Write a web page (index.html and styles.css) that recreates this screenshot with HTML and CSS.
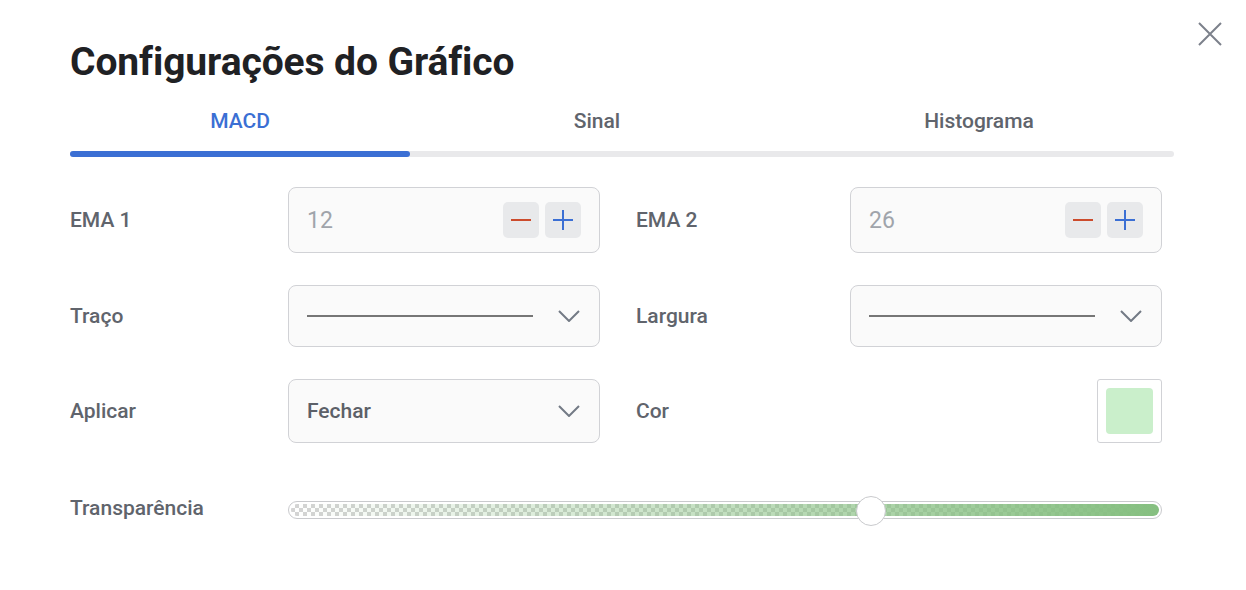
FILE: index.html
```html
<!DOCTYPE html>
<html lang="pt">
<head>
<meta charset="utf-8">
<title>Configurações do Gráfico</title>
<link rel="stylesheet" href="styles.css">
</head>
<body>
<div class="dialog">
  <button class="close" aria-label="Fechar">
    <svg width="24" height="24" viewBox="0 0 24 24"><path d="M1 1L23 23M23 1L1 23" stroke="#7c818b" stroke-width="2" fill="none"/></svg>
  </button>
  <h1 class="title">Configurações do Gráfico</h1>
  <div class="tabs">
    <div class="tab tab-macd active">MACD</div>
    <div class="tab tab-sinal">Sinal</div>
    <div class="tab tab-hist">Histograma</div>
  </div>
  <div class="track"><div class="track-fill"></div></div>

  <div class="form">
    <div class="row row-1">
      <div class="field">
        <div class="label">EMA 1</div>
        <div class="control stepper">
          <span class="value">12</span>
          <div class="steps">
            <span class="step"><svg width="20" height="20" viewBox="0 0 20 20"><path d="M0 10H20" stroke="#cc4b2c" stroke-width="2"/></svg></span>
            <span class="step"><svg width="20" height="20" viewBox="0 0 20 20"><path d="M0 10H20M10 0V20" stroke="#3b6fd4" stroke-width="2"/></svg></span>
          </div>
        </div>
      </div>
      <div class="field field-right">
        <div class="label">EMA 2</div>
        <div class="control stepper">
          <span class="value">26</span>
          <div class="steps">
            <span class="step"><svg width="20" height="20" viewBox="0 0 20 20"><path d="M0 10H20" stroke="#cc4b2c" stroke-width="2"/></svg></span>
            <span class="step"><svg width="20" height="20" viewBox="0 0 20 20"><path d="M0 10H20M10 0V20" stroke="#3b6fd4" stroke-width="2"/></svg></span>
          </div>
        </div>
      </div>
    </div>

    <div class="row row-2">
      <div class="field">
        <div class="label">Traço</div>
        <div class="control select">
          <span class="line"></span>
          <svg class="chev" width="22" height="12" viewBox="0 0 22 12"><path d="M1 1L11 11L21 1" stroke="#737a85" stroke-width="2" fill="none"/></svg>
        </div>
      </div>
      <div class="field field-right">
        <div class="label">Largura</div>
        <div class="control select">
          <span class="line"></span>
          <svg class="chev" width="22" height="12" viewBox="0 0 22 12"><path d="M1 1L11 11L21 1" stroke="#737a85" stroke-width="2" fill="none"/></svg>
        </div>
      </div>
    </div>

    <div class="row row-3">
      <div class="field">
        <div class="label">Aplicar</div>
        <div class="control select">
          <span class="select-text">Fechar</span>
          <svg class="chev" width="22" height="12" viewBox="0 0 22 12"><path d="M1 1L11 11L21 1" stroke="#737a85" stroke-width="2" fill="none"/></svg>
        </div>
      </div>
      <div class="field field-right">
        <div class="label">Cor</div>
        <div class="color-cell">
          <div class="swatch"><div class="swatch-fill"></div></div>
        </div>
      </div>
    </div>

    <div class="row row-4">
      <div class="label">Transparência</div>
      <div class="slider">
        <div class="slider-bar"></div>
        <div class="thumb" style="left: calc(66.8% - 15px)"></div>
      </div>
    </div>
  </div>
</div>
</body>
</html>
```

FILE: styles.css
```css
* { box-sizing: border-box; }
html, body { margin: 0; padding: 0; background: #fff; }
body {
  font-family: Roboto, "Noto Sans", "Liberation Sans", sans-serif;
  width: 1246px;
  height: 590px;
  overflow: hidden;
}
.dialog {
  position: relative;
  padding: 40px 0 0 70px;
  width: 1246px;
  height: 590px;
}
.close {
  position: absolute;
  top: 22px;
  left: 1198px;
  border: 0;
  padding: 0;
  background: none;
  width: 24px;
  height: 24px;
  display: block;
}
.close svg { display: block; }
.title {
  margin: 0;
  font-size: 39px;
  line-height: 44px;
  font-weight: 700;
  color: #1f2124;
  letter-spacing: -0.1px;
}
.tabs {
  display: flex;
  width: 1104px;
  margin-top: 25px;
}
.tab {
  font-size: 21px;
  line-height: 24px;
  font-weight: 500;
  color: #60646c;
  text-align: center;
}
.tab-macd { width: 340px; }
.tab-sinal { width: 374px; }
.tab-hist { width: 390px; }
.tab.active { color: #3b6fd4; }
.track {
  margin-top: 18px;
  width: 1104px;
  height: 6px;
  border-radius: 3px;
  background: #e9e9eb;
}
.track-fill {
  width: 340px;
  height: 6px;
  border-radius: 3px;
  background: #3b6fd4;
}
.form {
  margin-top: 30px;
  display: flex;
  flex-direction: column;
  gap: 32px;
  width: 1092px;
}
.row {
  display: flex;
  align-items: center;
}
.field {
  display: flex;
  align-items: center;
  width: 530px;
}
.field-right { margin-left: 36px; width: 526px; }
.label {
  width: 218px;
  flex: none;
  font-size: 21px;
  font-weight: 500;
  color: #60646c;
}
.field-right .label { width: 214px; }
.control {
  width: 312px;
  border: 1px solid #d1d2d6;
  border-radius: 8px;
  background: #fafafa;
  display: flex;
  align-items: center;
  padding: 0 18px;
}
.row-1 .control { height: 66px; }
.row-2 .control { height: 62px; }
.row-3 .control { height: 64px; }
.stepper { justify-content: space-between; }
.value {
  font-size: 23px;
  color: #a0a4ab;
}
.steps { display: flex; gap: 6px; }
.step {
  width: 36px;
  height: 36px;
  border-radius: 5px;
  background: #e8e9eb;
  display: flex;
  align-items: center;
  justify-content: center;
}
.step svg { display: block; }
.select { justify-content: space-between; padding-right: 19px; }
.line {
  width: 226px;
  height: 2px;
  background: #767676;
}
.chev { display: block; }
.select-text {
  font-size: 21px;
  font-weight: 500;
  color: #5c6068;
}
.color-cell {
  width: 312px;
  display: flex;
  justify-content: flex-end;
}
.swatch {
  width: 65px;
  height: 64px;
  border: 1px solid #d1d2d6;
  border-radius: 3px;
  padding: 8px;
  background: #fff;
}
.swatch-fill {
  width: 100%;
  height: 100%;
  border-radius: 4px;
  background: #caefcb;
}
.row-4 { height: 66px; }
.row-4 .label { width: 218px; }
.slider {
  position: relative;
  width: 874px;
  height: 18px;
  margin-top: 4px;
  border: 1px solid #c9cacd;
  border-radius: 9px;
  padding: 2px;
  background: #fff;
}
.slider-bar {
  height: 12px;
  border-radius: 6px;
  background:
    linear-gradient(to right, rgba(133, 191, 128, 0), rgba(133, 191, 128, 1)),
    repeating-conic-gradient(#d4d4d4 0 25%, #ffffff 0 50%) 0 0 / 8px 8px;
}
.thumb {
  position: absolute;
  top: -6px;
  width: 30px;
  height: 30px;
  border-radius: 50%;
  background: #fff;
  border: 1px solid #c9cacd;
}
```
